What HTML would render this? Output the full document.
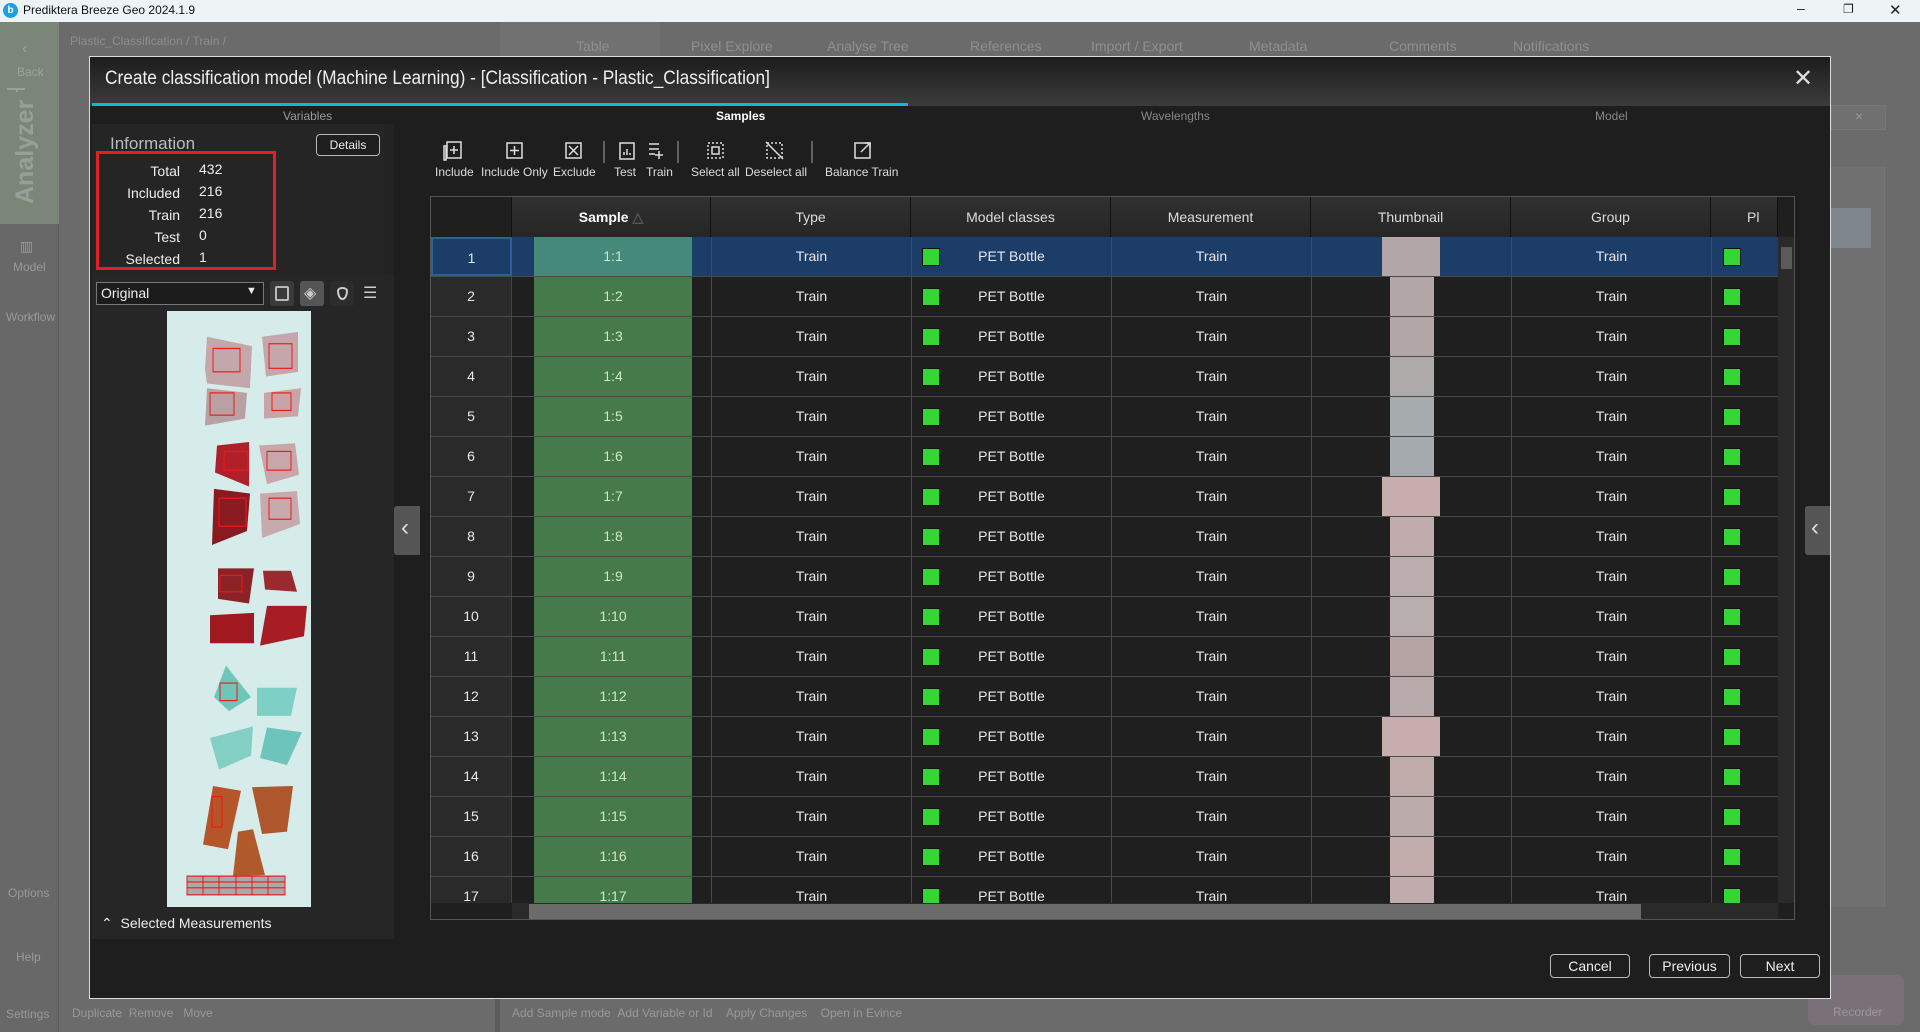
<!DOCTYPE html>
<html><head><meta charset="utf-8">
<style>
*{margin:0;padding:0;box-sizing:border-box}
body{width:1920px;height:1032px;overflow:hidden;background:#6b6b6b;font-family:"Liberation Sans Narrow","Liberation Sans",sans-serif;color:#ddd;position:relative}
.a{position:absolute}
.t{position:absolute;white-space:nowrap}
.row{position:absolute;left:0;width:1347px;height:40px;border-bottom:1px solid #4a4a4a;background:#1f1f1f}
.row div{position:absolute;top:0;height:39px;line-height:39px;text-align:center;font-size:14px;color:#e8e8e8}
.rh{left:0;width:81px;background:#2a2a2a;border-right:1px solid #444}
.sc{left:103px;width:158px;background:#477a4b;color:#cfe8c8!important}
.c{width:200px;border-left:1px solid #4a4a4a}
.sq{width:18px!important;height:18px!important;top:11px!important;background:#33d633;border:1px solid #111}
.th{width:44px!important;left:959px;background:#b3a6a6}
.hd{position:absolute;top:0;height:40px;line-height:40px;text-align:center;font-size:14px;color:#ddd;background:linear-gradient(#303030,#262626);border-right:1px solid #111}
.btn{position:absolute;height:24px;border:1px solid #bbb;border-radius:4px;color:#eee;font-size:14px;line-height:22px;text-align:center;background:#1e1e1e}
.tl{font-size:12px;color:#ddd;position:absolute;top:165px}
</style></head><body>
<div class="a" style="left:0;top:0;width:1920px;height:22px;background:#eef3f6"></div>
<div class="a" style="left:3px;top:3px;width:15px;height:15px;border-radius:50%;background:#1aa0e0;color:#fff;font-size:10px;text-align:center;line-height:15px;font-weight:bold">b</div>
<div class="t" style="left:23px;top:3px;font-size:12px;color:#111">Prediktera Breeze Geo 2024.1.9</div>
<div class="t" style="left:1797px;top:0px;font-size:14px;color:#222">–</div>
<div class="t" style="left:1843px;top:2px;font-size:12px;color:#222">❐</div>
<div class="t" style="left:1889px;top:1px;font-size:15px;color:#222">✕</div>
<div class="a" style="left:0;top:22px;width:59px;height:1010px;background:#686868;border-right:1px solid #5e5e5e"></div>
<div class="a" style="left:0;top:22px;width:59px;height:202px;background:#7a8778"></div>
<div class="t" style="left:22px;top:40px;font-size:16px;color:#9aa39a">‹</div>
<div class="t" style="left:17px;top:65px;font-size:12px;color:#9aa39a">Back</div>
<div class="a" style="left:7px;top:88px;width:18px;height:2px;background:#9aa39a"></div>
<div class="a" style="left:16px;top:88px;width:2px;height:4px;background:#9aa39a"></div>
<div class="t" style="left:11px;top:204px;font-size:25px;font-weight:bold;color:#96a096;transform:rotate(-90deg);transform-origin:0 0">Analyzer</div>
<div class="t" style="left:20px;top:238px;font-size:14px;color:#999">▥</div>
<div class="t" style="left:13px;top:260px;font-size:12px;color:#999">Model</div>
<div class="t" style="left:6px;top:310px;font-size:12px;color:#999">Workflow</div>
<div class="t" style="left:8px;top:886px;font-size:12px;color:#999">Options</div>
<div class="t" style="left:16px;top:950px;font-size:12px;color:#999">Help</div>
<div class="t" style="left:6px;top:1007px;font-size:12px;color:#999">Settings</div>
<div class="t" style="left:70px;top:34px;font-size:12px;color:#8e8e8e">Plastic_Classification / Train /</div>
<div class="a" style="left:500px;top:22px;width:160px;height:34px;background:#717171"></div>
<div class="t" style="left:576px;top:38px;font-size:14px;color:#8f8f8f">Table</div>
<div class="t" style="left:691px;top:38px;font-size:14px;color:#8f8f8f">Pixel Explore</div>
<div class="t" style="left:827px;top:38px;font-size:14px;color:#8f8f8f">Analyse Tree</div>
<div class="t" style="left:970px;top:38px;font-size:14px;color:#8f8f8f">References</div>
<div class="t" style="left:1091px;top:38px;font-size:14px;color:#8f8f8f">Import / Export</div>
<div class="t" style="left:1249px;top:38px;font-size:14px;color:#8f8f8f">Metadata</div>
<div class="t" style="left:1389px;top:38px;font-size:14px;color:#8f8f8f">Comments</div>
<div class="t" style="left:1513px;top:38px;font-size:14px;color:#8f8f8f">Notifications</div>
<div class="a" style="left:1831px;top:105px;width:55px;height:25px;border:1px solid #777;background:#707070"></div>
<div class="t" style="left:1855px;top:108px;font-size:14px;color:#999">×</div>
<div class="a" style="left:1831px;top:167px;width:54px;height:740px;background:#707070;border-right:1px solid #777"></div>
<div class="a" style="left:1831px;top:208px;width:40px;height:40px;background:#7e858c"></div>
<div class="a" style="left:1808px;top:975px;width:96px;height:50px;border-radius:8px;background:#7a7078"></div>
<div class="t" style="left:1833px;top:1005px;font-size:12px;color:#999">Recorder</div>
<div class="a" style="left:495px;top:999px;width:5px;height:33px;background:#5c5c5c"></div>
<div class="t" style="left:72px;top:1006px;font-size:12px;color:#999">Duplicate&nbsp;&nbsp;Remove&nbsp;&nbsp;&nbsp;Move</div>
<div class="t" style="left:512px;top:1006px;font-size:12px;color:#999">Add Sample mode&nbsp;&nbsp;Add Variable or Id&nbsp;&nbsp;&nbsp;&nbsp;Apply Changes&nbsp;&nbsp;&nbsp;&nbsp;Open in Evince</div>
<div class="a" style="left:89px;top:56px;width:1742px;height:943px;background:#1e1e1e;border:1px solid #ddd"></div>
<div class="a" style="left:90px;top:57px;width:1740px;height:46px;background:linear-gradient(#1c1c1c,#3a3a3a)"></div>
<div class="t" style="left:105px;top:68px;font-size:19px;color:#eee;transform:scaleX(0.91);transform-origin:0 0">Create classification model (Machine Learning) - [Classification - Plastic_Classification]</div>
<div class="t" style="left:1793px;top:64px;font-size:24px;color:#ddd">✕</div>
<div class="a" style="left:90px;top:102px;width:1740px;height:4px;background:#3a3a3a"></div>
<div class="a" style="left:92px;top:103px;width:816px;height:3px;background:#12b6d6"></div>
<div class="t" style="left:283px;top:109px;font-size:12px;color:#999">Variables</div>
<div class="t" style="left:716px;top:109px;font-size:12px;color:#fff;font-weight:bold">Samples</div>
<div class="t" style="left:1141px;top:109px;font-size:12px;color:#888">Wavelengths</div>
<div class="t" style="left:1595px;top:109px;font-size:12px;color:#888">Model</div>
<div class="a" style="left:92px;top:124px;width:302px;height:815px;background:#252525"></div>
<div class="a" style="left:384px;top:124px;width:10px;height:810px;background:#232323"></div>
<div class="t" style="left:110px;top:134px;font-size:17px;color:#bbb">Information</div>
<div class="btn" style="left:316px;top:134px;width:64px;height:22px;font-size:12px;line-height:20px">Details</div>
<div class="a" style="left:96px;top:151px;width:180px;height:119px;border:3px solid #e21f26"></div>
<div class="t" style="left:110px;top:160px;width:70px;text-align:right;font-size:14px;line-height:22px;color:#eee">Total<br>Included<br>Train<br>Test<br>Selected</div>
<div class="t" style="left:199px;top:158px;font-size:14px;line-height:22px;color:#eee">432<br>216<br>216<br>0<br>1</div>
<div class="a" style="left:92px;top:275px;width:302px;height:664px;background:#262626"></div>
<div class="a" style="left:96px;top:282px;width:168px;height:23px;border:1px solid #777;background:#1c1c1c"></div>
<div class="t" style="left:101px;top:285px;font-size:14px;color:#eee">Original</div>
<div class="t" style="left:246px;top:285px;font-size:11px;color:#eee">▼</div>
<div class="a" style="left:270px;top:281px;width:24px;height:25px;border-radius:3px;background:#3a3a3a"></div>
<div class="a" style="left:275px;top:286px;width:14px;height:15px;border:2px solid #bbb;border-radius:2px"></div>
<div class="a" style="left:300px;top:281px;width:24px;height:25px;border-radius:3px;background:#555"></div>
<div class="t" style="left:304px;top:283px;font-size:16px;color:#ccc">◈</div>
<div class="a" style="left:330px;top:281px;width:24px;height:25px;border-radius:3px;background:#2c2c2c"></div>
<div class="a" style="left:337px;top:287px;width:11px;height:13px;border:2px solid #ccc;border-radius:50% 50% 50% 50%/30% 30% 70% 70%"></div>
<div class="t" style="left:363px;top:283px;font-size:16px;color:#ccc">☰</div>
<svg class="a" style="left:167px;top:311px" width="144" height="596" viewBox="0 0 144 596">
<rect width="144" height="596" fill="#d5ecea"/>
<g transform="scale(1,1.17)">
<polygon points="40,22 85,30 83,66 40,62 38,50" fill="#c3a7aa"/>
<polygon points="95,22 131,18 131,52 99,56" fill="#c3a7aa"/>
<polygon points="40,66 80,70 78,92 38,98" fill="#b9a0a3"/>
<polygon points="97,70 134,66 131,90 97,92" fill="#c7a4a6"/>
<polygon points="50,115 82,112 82,150 48,138" fill="#b0202a"/>
<polygon points="92,115 128,113 132,140 100,148" fill="#c7a7aa"/>
<polygon points="47,152 83,156 80,188 45,200" fill="#8a1a22"/>
<polygon points="93,156 130,154 133,182 95,194" fill="#c7aaad"/>
<polygon points="51,220 87,220 82,250 51,246" fill="#8a2228"/>
<polygon points="96,222 124,222 130,240 98,238" fill="#9a2a30"/>
<polygon points="43,260 87,258 87,284 43,284" fill="#a01820"/>
<polygon points="100,252 140,252 137,278 93,286" fill="#a81c24"/>
<polygon points="59,303 84,330 62,342 47,330" fill="#6ec6ba"/>
<polygon points="90,322 130,322 124,346 90,346" fill="#7ed0c6"/>
<polygon points="43,365 86,355 84,380 52,392" fill="#84cfc4"/>
<polygon points="100,356 135,360 120,388 93,382" fill="#6cc4ba"/>
<polygon points="46,406 74,410 61,460 36,456" fill="#b5552a"/>
<polygon points="85,407 126,406 120,445 95,447" fill="#b0562c"/>
<polygon points="71,445 86,443 98,482 66,483" fill="#b05a2c"/>
<g stroke="#f01818" stroke-width="1" fill="none">
<rect x="46" y="32" width="27" height="20"/><rect x="102" y="28" width="23" height="21"/><rect x="43" y="70" width="24" height="19"/><rect x="105" y="70" width="19" height="15"/>
<rect x="57" y="120" width="24" height="16"/><rect x="100" y="120" width="24" height="16"/><rect x="52" y="160" width="27" height="24"/><rect x="102" y="160" width="22" height="18"/>
<rect x="53" y="226" width="22" height="14"/><rect x="53" y="318" width="17" height="15"/><rect x="45" y="415" width="10" height="26"/>
<rect x="20" y="483" width="98" height="16" fill="#aaa"/>
<path d="M36,483v16M52,483v16M69,483v16M85,483v16M101,483v16M20,488h98M20,493h98"/>
</g></g></svg>
<div class="t" style="left:101px;top:915px;font-size:14px;color:#eee">⌃&nbsp;&nbsp;Selected Measurements</div>
<div class="a" style="left:394px;top:506px;width:26px;height:49px;background:#555;border-radius:3px 0 0 3px"></div>
<div class="t" style="left:401px;top:514px;font-size:24px;color:#ddd">‹</div>
<div class="a" style="left:1805px;top:506px;width:25px;height:49px;background:#555;border-radius:3px 0 0 3px"></div>
<div class="t" style="left:1811px;top:514px;font-size:24px;color:#ddd">‹</div>
<svg class="a" style="left:440px;top:138px" width="460" height="26" fill="none" stroke="#ddd" stroke-width="1.5">
<rect x="7" y="4" width="14" height="16"/><rect x="4" y="8" width="2" height="14"/><path d="M14,8v8M10,12h8"/>
<rect x="67" y="5" width="15" height="15"/><path d="M74.5,8v9M70,12.5h9"/>
<rect x="126" y="5" width="15" height="15"/><path d="M129,8l9,9M138,8l-9,9"/>
<path d="M164,3v22" stroke="#777"/>
<rect x="180" y="5" width="14" height="16"/><path d="M184,17v-3M187,17v-6M190,17v-2"/>
<path d="M209,6h10M209,11h10M209,16h6M219,13v8M215,17h8"/>
<path d="M238,3v22" stroke="#777"/>
<rect x="268" y="5" width="15" height="15" stroke-dasharray="2 2"/><rect x="272" y="9" width="7" height="7"/>
<rect x="327" y="5" width="15" height="15" stroke-dasharray="2 2"/><path d="M326,4l17,17"/>
<path d="M372,3v22" stroke="#777"/>
<rect x="415" y="5" width="15" height="15"/><path d="M421,14l9,-9M425,5h5v5"/>
</svg>
<div class="tl" style="left:435px">Include</div>
<div class="tl" style="left:481px">Include Only</div>
<div class="tl" style="left:553px">Exclude</div>
<div class="tl" style="left:614px">Test</div>
<div class="tl" style="left:646px">Train</div>
<div class="tl" style="left:691px">Select all</div>
<div class="tl" style="left:745px">Deselect all</div>
<div class="tl" style="left:825px">Balance Train</div>
<div class="a" style="left:430px;top:196px;width:1365px;height:724px;border:1px solid #555;background:#1f1f1f;overflow:hidden">
 <div class="hd" style="left:0;width:81px;background:#1f1f1f"></div>
 <div class="hd" style="left:81px;width:199px;font-weight:bold;color:#fff">Sample <span style="color:#555">△</span></div>
 <div class="hd" style="left:280px;width:200px">Type</div>
 <div class="hd" style="left:480px;width:200px">Model classes</div>
 <div class="hd" style="left:680px;width:200px">Measurement</div>
 <div class="hd" style="left:880px;width:200px">Thumbnail</div>
 <div class="hd" style="left:1080px;width:200px">Group</div>
 <div class="hd" style="left:1280px;width:67px;text-align:left;padding-left:36px">Pl</div>
 <div class="a" style="left:1347px;top:0;width:17px;height:40px;background:#1f1f1f"></div>
 <div class="a" style="left:0;top:40px;width:1347px;height:666px;overflow:hidden">
  <div class="row" style="top:0;background:#1b3d68"><div class="rh" style="background:#1b3d68;border:2px solid #2d5f99">1</div><div class="sc" style="background:#45897a">1:1</div><div class="c" style="left:280px">Train</div><div class="c" style="left:480px">PET Bottle</div><div class="sq" style="left:491px"></div><div class="c" style="left:680px">Train</div><div class="c" style="left:880px"></div><div class="th" style="left:951px;width:58px!important"></div><div class="c" style="left:1080px">Train</div><div class="c" style="left:1280px;width:67px"></div><div class="sq" style="left:1292px"></div></div>
  <div class="row" style="top:40px"><div class="rh">2</div><div class="sc">1:2</div><div class="c" style="left:280px">Train</div><div class="c" style="left:480px">PET Bottle</div><div class="sq" style="left:491px"></div><div class="c" style="left:680px">Train</div><div class="c" style="left:880px"></div><div class="th"></div><div class="c" style="left:1080px">Train</div><div class="c" style="left:1280px;width:67px"></div><div class="sq" style="left:1292px"></div></div>
  <div class="row" style="top:80px"><div class="rh">3</div><div class="sc">1:3</div><div class="c" style="left:280px">Train</div><div class="c" style="left:480px">PET Bottle</div><div class="sq" style="left:491px"></div><div class="c" style="left:680px">Train</div><div class="c" style="left:880px"></div><div class="th"></div><div class="c" style="left:1080px">Train</div><div class="c" style="left:1280px;width:67px"></div><div class="sq" style="left:1292px"></div></div>
  <div class="row" style="top:120px"><div class="rh">4</div><div class="sc">1:4</div><div class="c" style="left:280px">Train</div><div class="c" style="left:480px">PET Bottle</div><div class="sq" style="left:491px"></div><div class="c" style="left:680px">Train</div><div class="c" style="left:880px"></div><div class="th" style="background:#aeaaaa"></div><div class="c" style="left:1080px">Train</div><div class="c" style="left:1280px;width:67px"></div><div class="sq" style="left:1292px"></div></div>
  <div class="row" style="top:160px"><div class="rh">5</div><div class="sc">1:5</div><div class="c" style="left:280px">Train</div><div class="c" style="left:480px">PET Bottle</div><div class="sq" style="left:491px"></div><div class="c" style="left:680px">Train</div><div class="c" style="left:880px"></div><div class="th" style="background:#a6abae"></div><div class="c" style="left:1080px">Train</div><div class="c" style="left:1280px;width:67px"></div><div class="sq" style="left:1292px"></div></div>
  <div class="row" style="top:200px"><div class="rh">6</div><div class="sc">1:6</div><div class="c" style="left:280px">Train</div><div class="c" style="left:480px">PET Bottle</div><div class="sq" style="left:491px"></div><div class="c" style="left:680px">Train</div><div class="c" style="left:880px"></div><div class="th" style="background:#a4aaae"></div><div class="c" style="left:1080px">Train</div><div class="c" style="left:1280px;width:67px"></div><div class="sq" style="left:1292px"></div></div>
  <div class="row" style="top:240px"><div class="rh">7</div><div class="sc">1:7</div><div class="c" style="left:280px">Train</div><div class="c" style="left:480px">PET Bottle</div><div class="sq" style="left:491px"></div><div class="c" style="left:680px">Train</div><div class="c" style="left:880px"></div><div class="th" style="left:951px;width:58px!important;background:#c8adad"></div><div class="c" style="left:1080px">Train</div><div class="c" style="left:1280px;width:67px"></div><div class="sq" style="left:1292px"></div></div>
  <div class="row" style="top:280px"><div class="rh">8</div><div class="sc">1:8</div><div class="c" style="left:280px">Train</div><div class="c" style="left:480px">PET Bottle</div><div class="sq" style="left:491px"></div><div class="c" style="left:680px">Train</div><div class="c" style="left:880px"></div><div class="th" style="background:#c0acad"></div><div class="c" style="left:1080px">Train</div><div class="c" style="left:1280px;width:67px"></div><div class="sq" style="left:1292px"></div></div>
  <div class="row" style="top:320px"><div class="rh">9</div><div class="sc">1:9</div><div class="c" style="left:280px">Train</div><div class="c" style="left:480px">PET Bottle</div><div class="sq" style="left:491px"></div><div class="c" style="left:680px">Train</div><div class="c" style="left:880px"></div><div class="th" style="background:#bcaeae"></div><div class="c" style="left:1080px">Train</div><div class="c" style="left:1280px;width:67px"></div><div class="sq" style="left:1292px"></div></div>
  <div class="row" style="top:360px"><div class="rh">10</div><div class="sc">1:10</div><div class="c" style="left:280px">Train</div><div class="c" style="left:480px">PET Bottle</div><div class="sq" style="left:491px"></div><div class="c" style="left:680px">Train</div><div class="c" style="left:880px"></div><div class="th" style="background:#b8aeae"></div><div class="c" style="left:1080px">Train</div><div class="c" style="left:1280px;width:67px"></div><div class="sq" style="left:1292px"></div></div>
  <div class="row" style="top:400px"><div class="rh">11</div><div class="sc">1:11</div><div class="c" style="left:280px">Train</div><div class="c" style="left:480px">PET Bottle</div><div class="sq" style="left:491px"></div><div class="c" style="left:680px">Train</div><div class="c" style="left:880px"></div><div class="th" style="background:#b6a4a5"></div><div class="c" style="left:1080px">Train</div><div class="c" style="left:1280px;width:67px"></div><div class="sq" style="left:1292px"></div></div>
  <div class="row" style="top:440px"><div class="rh">12</div><div class="sc">1:12</div><div class="c" style="left:280px">Train</div><div class="c" style="left:480px">PET Bottle</div><div class="sq" style="left:491px"></div><div class="c" style="left:680px">Train</div><div class="c" style="left:880px"></div><div class="th" style="background:#b8aaaa"></div><div class="c" style="left:1080px">Train</div><div class="c" style="left:1280px;width:67px"></div><div class="sq" style="left:1292px"></div></div>
  <div class="row" style="top:480px"><div class="rh">13</div><div class="sc">1:13</div><div class="c" style="left:280px">Train</div><div class="c" style="left:480px">PET Bottle</div><div class="sq" style="left:491px"></div><div class="c" style="left:680px">Train</div><div class="c" style="left:880px"></div><div class="th" style="left:951px;width:58px!important;background:#c8adad"></div><div class="c" style="left:1080px">Train</div><div class="c" style="left:1280px;width:67px"></div><div class="sq" style="left:1292px"></div></div>
  <div class="row" style="top:520px"><div class="rh">14</div><div class="sc">1:14</div><div class="c" style="left:280px">Train</div><div class="c" style="left:480px">PET Bottle</div><div class="sq" style="left:491px"></div><div class="c" style="left:680px">Train</div><div class="c" style="left:880px"></div><div class="th" style="background:#c0abab"></div><div class="c" style="left:1080px">Train</div><div class="c" style="left:1280px;width:67px"></div><div class="sq" style="left:1292px"></div></div>
  <div class="row" style="top:560px"><div class="rh">15</div><div class="sc">1:15</div><div class="c" style="left:280px">Train</div><div class="c" style="left:480px">PET Bottle</div><div class="sq" style="left:491px"></div><div class="c" style="left:680px">Train</div><div class="c" style="left:880px"></div><div class="th" style="background:#bcabab"></div><div class="c" style="left:1080px">Train</div><div class="c" style="left:1280px;width:67px"></div><div class="sq" style="left:1292px"></div></div>
  <div class="row" style="top:600px"><div class="rh">16</div><div class="sc">1:16</div><div class="c" style="left:280px">Train</div><div class="c" style="left:480px">PET Bottle</div><div class="sq" style="left:491px"></div><div class="c" style="left:680px">Train</div><div class="c" style="left:880px"></div><div class="th" style="background:#c2acac"></div><div class="c" style="left:1080px">Train</div><div class="c" style="left:1280px;width:67px"></div><div class="sq" style="left:1292px"></div></div>
  <div class="row" style="top:640px"><div class="rh">17</div><div class="sc">1:17</div><div class="c" style="left:280px">Train</div><div class="c" style="left:480px">PET Bottle</div><div class="sq" style="left:491px"></div><div class="c" style="left:680px">Train</div><div class="c" style="left:880px"></div><div class="th" style="background:#c0acac"></div><div class="c" style="left:1080px">Train</div><div class="c" style="left:1280px;width:67px"></div><div class="sq" style="left:1292px"></div></div>
 </div>
 <div class="a" style="left:1347px;top:40px;width:17px;height:666px;background:#2a2a2a"></div>
 <div class="a" style="left:1350px;top:50px;width:11px;height:22px;background:#5a5a5a"></div>
 <div class="a" style="left:0;top:706px;width:1364px;height:17px;background:#1f1f1f"></div>
 <div class="a" style="left:81px;top:706px;width:1266px;height:17px;background:#2a2a2a"></div>
 <div class="a" style="left:98px;top:707px;width:1112px;height:15px;background:#6b6b6b"></div>
</div>
<div class="btn" style="left:1550px;top:954px;width:80px">Cancel</div>
<div class="btn" style="left:1649px;top:954px;width:81px">Previous</div>
<div class="btn" style="left:1740px;top:954px;width:80px">Next</div>
</body></html>
